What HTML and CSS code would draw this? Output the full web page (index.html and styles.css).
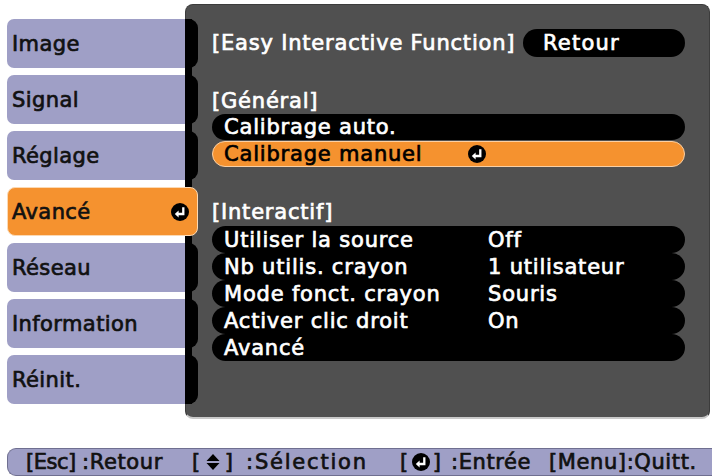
FILE: index.html
```html
<!DOCTYPE html>
<html lang="fr">
<head>
<meta charset="utf-8">
<title>Easy Interactive Function</title>
<link rel="stylesheet" href="styles.css">
</head>
<body>
<div class="screen">
  <div class="main">
    <nav class="menu">
      <div class="item"><span class="label">Image</span><span class="tab"></span></div>
      <div class="item"><span class="label">Signal</span><span class="tab"></span></div>
      <div class="item"><span class="label">Réglage</span><span class="tab"></span></div>
      <div class="item active"><span class="label">Avancé
        <svg class="enter" viewBox="0 0 18 18" width="18" height="18"><circle cx="9" cy="9" r="9" fill="#000"/><path d="M12.3 4.2V11H6.5" fill="none" stroke="#fff" stroke-width="2.3"/><path d="M7.6 7.4L3.8 11L7.6 14.6Z" fill="#fff"/></svg></span></div>
      <div class="item"><span class="label">Réseau</span><span class="tab"></span></div>
      <div class="item"><span class="label">Information</span><span class="tab"></span></div>
      <div class="item"><span class="label">Réinit.</span><span class="tab"></span></div>
    </nav>
    <section class="panel">
      <div class="title-row">
        <span class="title">[Easy Interactive Function]</span>
        <span class="retour">Retour</span>
      </div>
      <div class="section-label">[Général]</div>
      <div class="row">Calibrage auto.</div>
      <div class="row sel"><span class="k">Calibrage manuel</span>
        <svg class="enter" viewBox="0 0 18 18" width="18" height="18"><circle cx="9" cy="9" r="9" fill="#000"/><path d="M12.3 4.2V11H6.5" fill="none" stroke="#fff" stroke-width="2.3"/><path d="M7.6 7.4L3.8 11L7.6 14.6Z" fill="#fff"/></svg>
      </div>
      <div class="section-label inter">[Interactif]</div>
      <div class="rows">
        <div class="row"><span class="k">Utiliser la source</span><span class="v">Off</span></div>
        <div class="row"><span class="k">Nb utilis. crayon</span><span class="v">1 utilisateur</span></div>
        <div class="row"><span class="k">Mode fonct. crayon</span><span class="v">Souris</span></div>
        <div class="row"><span class="k">Activer clic droit</span><span class="v">On</span></div>
        <div class="row"><span class="k">Avancé</span></div>
      </div>
    </section>
  </div>
  <div class="footer">
    <span class="key esc">[Esc]</span>
    <span class="act">:Retour</span>
    <span class="key">[<svg class="updown" viewBox="0 0 14 18" width="14" height="18"><path d="M7 1L13.5 8H0.5Z M7 17L13.5 10H0.5Z" fill="#000"/></svg>]</span>
    <span class="act wide">:Sélection</span>
    <span class="key">[<svg class="fenter" viewBox="0 0 18 18" width="18" height="18"><circle cx="9" cy="9" r="9" fill="#000"/><path d="M12.3 4.2V11H6.5" fill="none" stroke="#fff" stroke-width="2.3"/><path d="M7.6 7.4L3.8 11L7.6 14.6Z" fill="#fff"/></svg>]</span>
    <span class="act">:Entrée</span>
    <span class="act">[Menu]:Quitt.</span>
  </div>
</div>
</body>
</html>
```

FILE: styles.css
```css
* { box-sizing: border-box; }
html, body {
  margin: 0;
  padding: 0;
  background: #fff;
}
body {
  width: 712px;
  height: 476px;
  overflow: hidden;
  font-family: "DejaVu Sans", "Liberation Sans", sans-serif;
  font-weight: normal;
  font-size: 21px;
  letter-spacing: 0.8px;
  -webkit-text-stroke: 0.7px currentColor;
}
.screen {
  display: flex;
  flex-direction: column;
}
.main {
  display: flex;
  margin-top: 4px;
  height: 415px;
}
.menu {
  position: relative;
  z-index: 1;
  margin-left: 7px;
  width: 191px;
  padding-top: 15px;
  display: flex;
  flex-direction: column;
  gap: 7px;
  background-image: linear-gradient(#000, #000);
  background-repeat: no-repeat;
  background-origin: content-box;
  background-clip: content-box;
  background-size: 7px 385px;
  background-position: 178px 0;
}
.item {
  display: flex;
  height: 49px;
}
.item .label {
  flex: 1;
  display: flex;
  align-items: center;
  padding-left: 5px;
  background: #9f9fc6;
  border-radius: 7px 0 0 7px;
  color: #111;
  letter-spacing: 0.4px;
}
.item .tab {
  width: 13px;
  background: #000;
  border-radius: 0 9px 9px 0;
}
.item.active {
  background: #f5922f;
  border: 1px solid #fbd9b4;
  border-radius: 8px;
}
.item.active .label {
  background: transparent;
  padding-left: 4px;
  justify-content: space-between;
  padding-right: 8px;
}
.enter { display: block; }
.panel {
  margin-left: -13px;
  width: 525px;
  height: 415px;
  background: #505050;
  border: 1px solid #3c3c3c;
  border-bottom: 2px solid #c9c9c9;
  border-radius: 8px;
  padding: 24px 24px 0 26px;
  color: #fff;
}
.title-row {
  display: flex;
  align-items: center;
  height: 28px;
}
.retour {
  margin-left: auto;
  width: 162px;
  height: 28px;
  background: #000;
  border-radius: 14px;
  display: flex;
  align-items: center;
  padding-left: 20px;
  letter-spacing: 1.2px;
}
.section-label {
  margin-top: 31px;
  height: 26px;
  line-height: 26px;
}
.section-label.inter { margin-top: 32px; }
.row {
  height: 26px;
  background: #000;
  border-radius: 13px;
  display: flex;
  align-items: center;
  padding-left: 12px;
}
.row.sel {
  margin-top: 1px;
  background: #f5922f;
  border: 1px solid #fbd0a4;
  color: #000;
  padding-left: 11px;
}
.row.sel .k { width: 244px; }
.rows { margin-top: 1px; }
.rows .row { height: 27px; border-radius: 13.5px; }
.rows .k { width: 264px; }
.footer {
  margin-top: 29px;
  margin-left: 7px;
  height: 28px;
  background: #9f9fc6;
  border: 1px solid #6f6f90;
  border-right: none;
  border-radius: 9px 0 0 9px;
  display: grid;
  grid-template-columns: 56px 110px 54px 154px 51px 98px auto;
  align-items: center;
  padding-left: 18px;
  color: #111;
  white-space: nowrap;
  font-size: 21px;
  letter-spacing: 0.6px;
}
.key, .act { display: flex; align-items: center; }
.key.esc { letter-spacing: -0.5px; }
.act.wide { letter-spacing: 1.8px; }
.updown { margin: 0 5px; }
.fenter { margin: 0 3px; }
```
